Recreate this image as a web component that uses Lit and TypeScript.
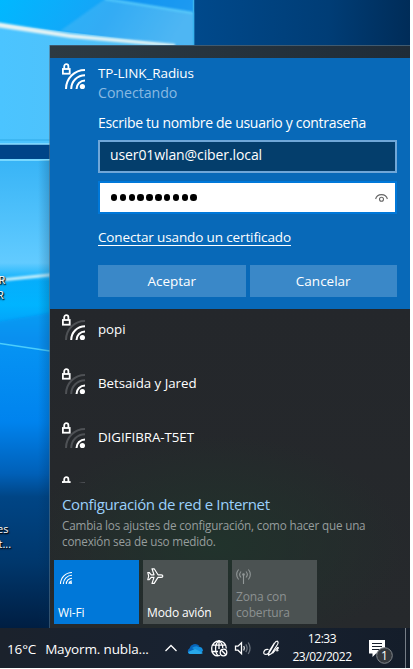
import { LitElement, html, svg, css } from "lit";
import { customElement, property } from "lit/decorators.js";

const ARCS = [
  "M4 26A19 19 0 0 1 23 7",
  "M9.200 26A13.800 13.800 0 0 1 23 12.200",
  "M14.500 26A8.500 8.500 0 0 1 23 17.500",
];

@customElement("wifi-signal")
class WifiSignal extends LitElement {
  @property({ type: Number }) bars = 3;
  static styles = css`
    :host { display: block; width: 24px; height: 27px; }
    svg { display: block; }
    .arc { fill: none; stroke: #fff; stroke-width: 2; }
    .off { stroke: #4e5155; }
  `;
  render() {
    return html`<svg width="24" height="27" viewBox="0 0 24 27">
      ${ARCS.map((d, i) => svg`<path class="arc ${3 - i > this.bars ? "off" : ""}" d=${d} />`)}
      <circle cx="20.400" cy="23.500" r="2.600" fill="#fff" />
      <path d="M2.200 6V3.400a2.100 2.300 0 0 1 4.200 0V6" fill="none" stroke="#fff" stroke-width="1.800" />
      <rect x=".9" y="6" width="6.800" height="4.700" fill="none" stroke="#fff" stroke-width="1.800" />
    </svg>`;
  }
}

@customElement("network-row")
class NetworkRow extends LitElement {
  @property() name = "";
  @property({ type: Number }) bars = 3;
  static styles = css`
    :host { display: flex; height: 54px; flex: none; }
    wifi-signal { margin: 5px 12px 0 12px; }
    .name { padding-top: 10px; line-height: 20px; font-size: 13.300px; letter-spacing: -.03px; white-space: nowrap; }
  `;
  render() {
    return html`<wifi-signal .bars=${this.bars}></wifi-signal><div class="name">${this.name}</div>`;
  }
}

@customElement("desktop-wallpaper")
class DesktopWallpaper extends LitElement {
  static styles = css`:host, svg { display: block; width: 410px; height: 628px; }`;
  render() {
    return html`<svg viewBox="0 0 410 628" preserveAspectRatio="none">
      <defs>
        <linearGradient id="night" x1="0" x2="1" y1="0" y2=".05">
          <stop offset=".45" stop-color="#004a8d" /><stop offset=".8" stop-color="#003d76" /><stop offset="1" stop-color="#002c58" />
        </linearGradient>
        <linearGradient id="top" x1="0" x2="1" y1="0" y2=".15">
          <stop offset="0" stop-color="#00b8ff" /><stop offset=".6" stop-color="#18a2f6" /><stop offset="1" stop-color="#42b2f3" />
        </linearGradient>
        <linearGradient id="pane" x1="0" x2="1" y1="0" y2="0">
          <stop offset="0" stop-color="#4bc4ff" /><stop offset="1" stop-color="#55bdf2" />
        </linearGradient>
        <linearGradient id="low" x1="0" x2="0" y1="160" y2="628" gradientUnits="userSpaceOnUse">
          <stop offset="0" stop-color="#38b4f6" /><stop offset=".22" stop-color="#62cbff" /><stop offset=".26" stop-color="#05aefb" />
          <stop offset=".31" stop-color="#00b4ff" /><stop offset=".38" stop-color="#0695f4" /><stop offset=".56" stop-color="#0083ee" />
          <stop offset=".67" stop-color="#0060b8" /><stop offset=".72" stop-color="#004585" /><stop offset=".86" stop-color="#00376c" />
          <stop offset="1" stop-color="#001e42" />
        </linearGradient>
        <linearGradient id="shade" x1="38" x2="50" y1="0" y2="0" gradientUnits="userSpaceOnUse">
          <stop offset="0" stop-color="#002850" stop-opacity="0" /><stop offset="1" stop-color="#002850" stop-opacity=".22" />
        </linearGradient>
        <filter id="soft" x="-10%" y="-60%" width="120%" height="220%"><feGaussianBlur stdDeviation="1.100" /></filter>
        <clipPath id="logo"><rect width="195" height="146" /></clipPath>
      </defs>
      <rect width="410" height="628" fill="url(#night)" />
      <g clip-path="url(#logo)">
        <rect width="194" height="144" fill="url(#pane)" />
        <path d="M0 0H194V47L0 24Z" fill="url(#top)" />
        <path d="M60 0H194V13L112 0Z" fill="#0a8ef0" opacity=".65" />
        <path d="M105 -1L194 13V47L60 31Z" fill="#66bff3" opacity=".35" filter="url(#soft)" />
        <path d="M-4 22L70 34L175 44V47L70 38L-4 27Z" fill="#e6f4f4" filter="url(#soft)" />
        <path d="M105 -1L193 13" stroke="#5bcdfc" stroke-width="2" filter="url(#soft)" />
        <path d="M0 140H60M193.500 0V47" stroke="#38b3ee" stroke-width="1.500" />
        <path d="M0 144H60" stroke="#8bdcff" stroke-width="1.600" />
      </g>
      <rect y="145" width="60" height="13.500" fill="#004488" />
      <rect y="159" width="50" height="469" fill="url(#low)" />
      <path d="M0 160H50" stroke="#78d8ff" stroke-width="2" />
      <path d="M-4 279L54 273V276L-4 282Z" fill="#c9f0fb" filter="url(#soft)" />
      <path d="M-4 322L54 312V351L-4 343Z" fill="#078cec" opacity=".5" filter="url(#soft)" />
      <path d="M0 343.500L50 351" stroke="#4ccdfb" stroke-width="1.400" />
      <rect x="38" y="160" width="12" height="468" fill="url(#shade)" />
    </svg>`;
  }
}

@customElement("app-root")
class AppRoot extends LitElement {
  static styles = css`
    :host { display: block; width: 413px; height: 669px; background: #fff; overflow: hidden;
      font-family: "Open Sans", "Noto Sans", sans-serif; font-size: 13px; color: #fff; }
    * { box-sizing: border-box; }
    svg { display: block; flex: none; }
    .screen { position: relative; width: 410px; height: 668px; display: flex; flex-direction: column; }
    .desk-label { position: absolute; left: 0; font-size: 11px; line-height: 15px; width: 50px;
      white-space: pre; text-shadow: 0 1px 2px #000, 1px 1px 1px #000; }
    .desk-label div { text-indent: -1.500px; }
    .desk-label .wide { text-indent: -3px; }
    .shortcut { top: 272px; }
    .file { top: 521px; }
    .flyout { position: absolute; left: 50px; top: 45px; width: 360px; height: 583px; display: flex; flex-direction: column;
      background: radial-gradient(ellipse 190px 110px at 165px 500px, #21332c, #21332c00), linear-gradient(#242830, #24272b 45%, #26292c);
      box-shadow: -1px 0 0 #52708699; }
    .strip { height: 13px; flex: none; background: linear-gradient(90deg, #2d3a42, #1f2c38); border-top: 1px solid #3f5a70; }
    .active { height: 251px; flex: none; background: #0869b8; display: flex; }
    .active wifi-signal { margin: 5px 12px 0 12px; }
    .form { width: 299px; padding-top: 5px; display: flex; flex-direction: column; white-space: nowrap; }
    .ssid { font-size: 13.500px; line-height: 20px; letter-spacing: -.1px; }
    .status { font-size: 14.200px; line-height: 20px; color: #88b9e2; letter-spacing: -.05px; }
    .prompt { font-size: 14px; line-height: 20px; margin-top: 10px; letter-spacing: -.3px; }
    .field { height: 33px; margin-top: 7px; border: 2px solid #70a7d8; background: #043e6c; padding: 0 10px;
      line-height: 26px; font-size: 14px; letter-spacing: -.1px; }
    .password { margin-top: 8px; border-color: #0078d9; background: #fff; color: #000; display: flex; align-items: center;
      justify-content: space-between; padding-right: 7px; }
    .dots { display: flex; gap: 2.350px; padding-left: .9px; }
    .dot { width: 6.500px; height: 6.500px; border-radius: 50%; background: #000; }
    .link { align-self: flex-start; height: 17px; line-height: 17px; margin-top: 15px; border-bottom: 1px solid #fff;
      font-size: 13.500px; letter-spacing: -.13px; }
    .actions { display: flex; gap: 4px; margin-top: 19px; }
    .button { flex: 1; height: 32px; line-height: 32px; background: #3a88c8; text-align: center; font-size: 13.500px; }
    .list { height: 174px; overflow: hidden; flex: none; display: flex; flex-direction: column; }
    .settings { padding: 10px 12px 0; height: 77px; white-space: nowrap; }
    .title { color: #9bd0fb; font-size: 15px; line-height: 22px; letter-spacing: -.37px; }
    .note { color: #969d9d; font-size: 11.700px; line-height: 16px; margin-top: 2px; letter-spacing: -.18px; }
    .tiles { display: flex; gap: 4px; padding-left: 4px; }
    .tile { width: 85px; height: 64px; background: #4b5252; display: flex; flex-direction: column; justify-content: space-between;
      padding: 8px 4px 3px; font-size: 12px; line-height: 16px; letter-spacing: -.15px; white-space: pre; }
    .on { background: #0078d9; }
    .disabled { color: #8b9191; }
    .taskbar { height: 40px; background: linear-gradient(90deg, #1b222c, #182231 50%, #141d2a); display: flex; align-items: center; white-space: pre; }
    .weather { display: flex; gap: 9px; padding: 2px 0 0 7px; width: 164px; font-size: 13.500px; letter-spacing: -.15px; }
    .clock { width: 68px; text-align: center; font-size: 12px; line-height: 18px; letter-spacing: -.45px; }
    .notice { margin-left: 11px; }
  `;

  render() {
    return html`<div class="screen">
      <desktop-wallpaper></desktop-wallpaper>
      <div class="desk-label shortcut"><div>R</div><div class="wide">R</div></div>
      <div class="desk-label file"><div class="wide">es</div><div>t...</div></div>
      <section class="flyout">
        <div class="strip"></div>
        <div class="active">
          <wifi-signal .bars=${3}></wifi-signal>
          <div class="form">
            <div class="ssid">TP-LINK_Radius</div>
            <div class="status">Conectando</div>
            <div class="prompt">Escribe tu nombre de usuario y contraseña</div>
            <div class="field">user01wlan@ciber.local</div>
            <div class="field password">
              <div class="dots">${Array.from({ length: 10 }, () => html`<span class="dot"></span>`)}</div>
              <svg width="13" height="10" viewBox="0 0 13 10" fill="none" stroke="#666" stroke-width="1.100">
                <path d="M.6 6C1.400 3 3.800 1.600 6.500 1.600S11.600 3 12.400 6" /><circle cx="6.500" cy="6.200" r="2" />
              </svg>
            </div>
            <div class="link">Conectar usando un certificado</div>
            <div class="actions"><div class="button">Aceptar</div><div class="button">Cancelar</div></div>
          </div>
        </div>
        <div class="list">
          <network-row name="popi" .bars=${2}></network-row>
          <network-row name="Betsaida y Jared" .bars=${1}></network-row>
          <network-row name="DIGIFIBRA-T5ET" .bars=${1}></network-row>
          <network-row .bars=${1}></network-row>
        </div>
        <div class="settings">
          <div class="title">Configuración de red e Internet</div>
          <div class="note">Cambia los ajustes de configuración, como hacer que una<br />conexión sea de uso medido.</div>
        </div>
        <div class="tiles">
          <div class="tile on">
            <svg width="16" height="18" viewBox="0 0 16 18" fill="none" stroke="#fff" stroke-width="1.100">
              <path d="M2.500 16A11.500 11.500 0 0 1 14 4.500M5.300 16A8.700 8.700 0 0 1 14 7.300M8.300 16A5.700 5.700 0 0 1 14 10.300M11 16A3 3 0 0 1 14 13" /><circle cx="13" cy="15" r="1.100" fill="#fff" stroke="none" />
            </svg>
            <span>Wi-Fi</span>
          </div>
          <div class="tile">
            <svg width="17" height="17" viewBox="0 0 17 17" fill="none" stroke="#fff" stroke-width="1.150" stroke-linejoin="round">
              <path d="M.8 4.500H2.200L4.200 6.800H7L5 .8H7.200L11 6.800H14.200C16.400 6.800 16.400 9.400 14.200 9.400H11L7.200 15.400H5L7 9.400H4.200L2.200 11.700H.8L1.700 8.100Z" />
            </svg>
            <span>Modo avión</span>
          </div>
          <div class="tile disabled">
            <svg width="16" height="17" viewBox="0 0 16 17" fill="none" stroke="#929898" stroke-width="1.100">
              <path d="M2.600 1.500A7.500 7.500 0 0 0 2.600 11.500M5 3.500A4.500 4.500 0 0 0 5 9.500M10 3.500A4.500 4.500 0 0 1 10 9.500M12.400 1.500A7.500 7.500 0 0 1 12.400 11.500M7.500 6V16" /><circle cx="7.500" cy="6.500" r=".8" />
            </svg>
            <span>Zona con
cobertura</span>
          </div>
        </div>
      </section>
      <footer class="taskbar">
        <div class="weather"><span>16°C</span><span>Mayorm. nubla...</span></div>
        <svg width="124" height="40" viewBox="164 628 124 40" fill="none" stroke="#fff" stroke-width="1.300">
          <path d="M165.500 651L171 645.500L176.500 651" />
          <g stroke="none">
            <path d="M190 654a3 3 0 0 1-.6-5.600a5.800 5.800 0 0 1 9.800-2.600l1 8.200Z" fill="#0864b8" />
            <path d="M192 648q4-3 6.500-.8q3.500-1 4.500 3.300l-2 3Z" fill="#1490df" />
            <path d="M188 652l7-3l8 4q-1 1-3 1H190q-1.500 0-2-2Z" fill="#28a8ea" />
          </g>
          <path d="M220 655.500C214 657.500 211.200 652 211.700 648A7.200 7.200 0 0 1 226.300 648.500M219 640.800V649M219 640.800C214.500 644 214.500 653 218.500 655.800M219 640.800C221.500 642.500 223 646 222.700 648M212.500 645.200H225.500M212 651.500H218" />
          <circle cx="223.500" cy="652.500" r="3.300" /><path d="M221.500 650.200L225.800 654.800" />
          <path d="M235.500 646.200H238L241.500 642.800V653.700L238 650.200H235.500Z" />
          <path d="M243.700 646Q245.200 648.200 243.700 650.500" stroke="#eee" />
          <path d="M245.800 644.300Q248.500 648.200 245.800 652.200M248.200 642.500Q252 648.200 248.200 654" stroke="#6b737d" />
          <path d="M268.500 649.500C263.500 648.500 261.500 655.500 267 654.300C270 653.500 272.500 645.500 275.500 642C277.500 640 279 642 277.500 644.500L271.500 653.500L268.700 655.200L269 651.500L274.500 642.800M272.500 653.500L277.500 647.500Q279.500 647 277 650Q276 651.500 278.500 650.500" stroke-width="1.150" />
        </svg>
        <div class="clock">12:33
23/02/2022</div>
        <svg class="notice" width="42" height="40" viewBox="367 628 42 40">
          <path d="M369 640H385V653.500H376L372.500 657V653.500H369Z" fill="#fff" />
          <path d="M372 643.500H382M372 646.500H382M372 649.500H382" stroke="#18202c" stroke-width="1.100" />
          <circle cx="384.500" cy="655.500" r="7.800" fill="#34383d" stroke="#81868b" />
          <text x="384.500" y="660" text-anchor="middle" font-size="12" fill="#fff">1</text>
          <path d="M405.500 628V668" stroke="#767e87" />
        </svg>
      </footer>
    </div>`;
  }
}
